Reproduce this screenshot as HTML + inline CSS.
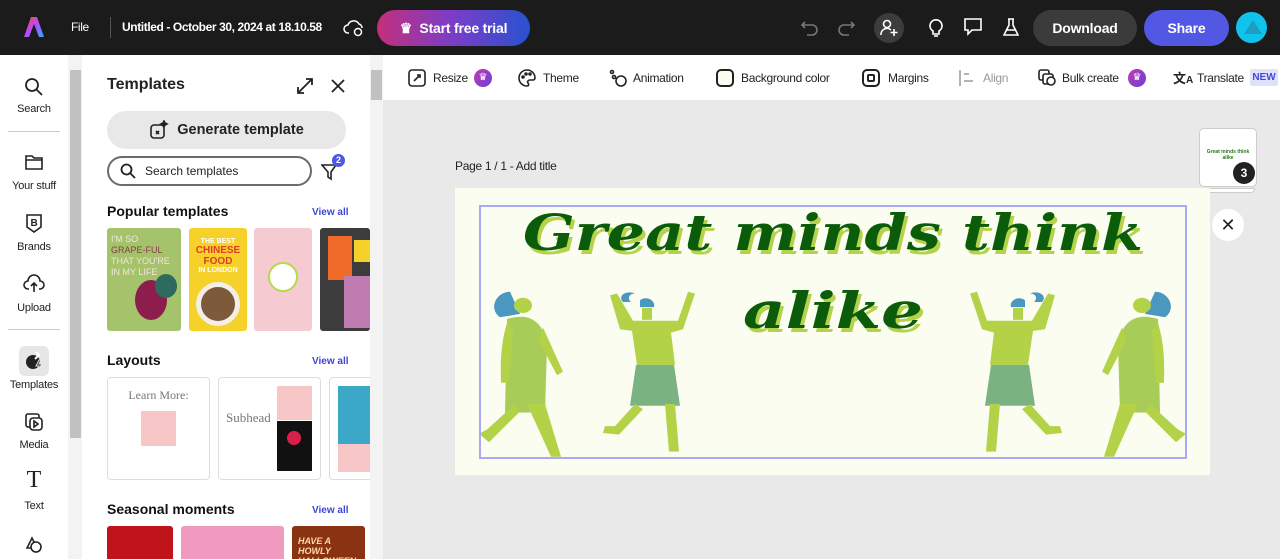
<!DOCTYPE html>
<html><head><meta charset="utf-8"><style>
*{box-sizing:border-box;margin:0;padding:0}
html,body{width:1280px;height:559px;overflow:hidden}
body{font-family:"Liberation Sans",sans-serif;background:#e9e9e9;position:relative;color:#222}
.a{position:absolute}
.top{left:0;top:0;width:1280px;height:55px;background:#1b1b1b;color:#fff}
.t{font-size:12px;font-weight:bold;letter-spacing:-.4px}
.btn{border-radius:18px;color:#fff;font-weight:bold;font-size:14px;display:flex;align-items:center;justify-content:center;letter-spacing:-.2px}
.rail{left:0;top:55px;width:68px;height:504px;background:#fff}
.lbl{width:68px;text-align:center;font-size:11px;color:#222;letter-spacing:-.2px}
.ic{left:22px;width:24px;height:24px}
.panel{left:82px;top:55px;width:288px;height:504px;background:#fff;overflow:hidden}
.h{font-weight:bold;font-size:14px;color:#111}
.va{font-size:10px;font-weight:bold;color:#3f46d0}
.tb{top:55px;left:383px;width:897px;height:45px;background:#fff}
.ti{font-size:12px;color:#222;top:71px;letter-spacing:-.3px}
</style></head><body>
<div class="a top">
 <svg class="a" style="left:23px;top:16px" width="22" height="22" viewBox="0 0 22 22"><defs><linearGradient id="g" x1="0" y1="0" x2="1" y2="1"><stop offset="0" stop-color="#ff4b3b"/><stop offset=".5" stop-color="#b44dff"/><stop offset="1" stop-color="#2fa9ff"/></linearGradient></defs><path d="M8 1h6l7 20h-5l-5-13-5 13H1z" fill="url(#g)"/></svg>
 <div class="a t" style="left:71px;top:20px;font-weight:normal">File</div>
 <div class="a" style="left:110px;top:17px;width:1px;height:21px;background:#555"></div>
 <div class="a t" style="left:122px;top:20px">Untitled - October 30, 2024 at 18.10.58</div>
 <svg class="a" style="left:343px;top:17px" width="22" height="20" viewBox="0 0 22 20" fill="none" stroke="#fff" stroke-width="1.5"><path d="M6 16H5a4 4 0 0 1 0-8 6 6 0 0 1 11-1 4 4 0 0 1 3 4"/><circle cx="15" cy="15" r="3.5"/></svg>
 <div class="a btn" style="left:377px;top:10px;width:153px;height:36px;background:linear-gradient(90deg,#c2307b,#7a3dc8,#2952cf)">♛&nbsp; Start free trial</div>
 <svg class="a" style="left:800px;top:18px" width="56" height="20" viewBox="0 0 56 20" fill="none" stroke="#777" stroke-width="1.6"><path d="M5 4L2 7l3 3M2 7h10a5 5 0 0 1 0 10H7"/><path d="M51 4l3 3-3 3M54 7H44a5 5 0 0 0 0 10h5"/></svg>
 <div class="a" style="left:874px;top:13px;width:30px;height:30px;border-radius:50%;background:#3c3c3c"></div>
 <svg class="a" style="left:879px;top:18px" width="20" height="20" viewBox="0 0 20 20" fill="none" stroke="#fff" stroke-width="1.6"><circle cx="8" cy="6" r="3.5"/><path d="M2 17a6 6 0 0 1 10-5M15 11v7M11.5 14.5h7"/></svg>
 <svg class="a" style="left:927px;top:17px" width="18" height="20" viewBox="0 0 18 20" fill="none" stroke="#fff" stroke-width="1.6"><path d="M6 14a6 6 0 1 1 6 0v3H6z"/><path d="M7 19h4"/></svg>
 <svg class="a" style="left:963px;top:17px" width="20" height="20" viewBox="0 0 20 20" fill="none" stroke="#fff" stroke-width="1.6"><path d="M2 2h16v11H9l-4 4v-4H2z"/></svg>
 <svg class="a" style="left:1003px;top:17px" width="16" height="20" viewBox="0 0 16 20" fill="none" stroke="#fff" stroke-width="1.6"><path d="M5 2h6M6 2v6L1 18h14L10 8V2M3.5 13h9"/></svg>
 <div class="a btn" style="left:1033px;top:10px;width:104px;height:36px;background:#3b3b3b">Download</div>
 <div class="a btn" style="left:1144px;top:10px;width:85px;height:36px;background:#5258e4">Share</div>
 <div class="a" style="left:1236px;top:12px;width:31px;height:31px;border-radius:50%;background:#0fc3ec;overflow:hidden"><div style="margin:8px 0 0 8px;width:0;height:0;border-left:9px solid transparent;border-right:9px solid transparent;border-bottom:14px solid #1c9ec0"></div></div>
</div>

<div class="a rail">
 <svg class="a ic" style="top:20px" viewBox="0 0 24 24" fill="none" stroke="#222" stroke-width="1.8"><circle cx="10" cy="10" r="6"/><path d="M14.5 14.5L20 20"/></svg>
 <div class="a lbl" style="top:48px">Search</div>
 <div class="a" style="left:8px;top:76px;width:52px;height:1px;background:#ccc"></div>
 <svg class="a ic" style="top:95px" viewBox="0 0 24 24" fill="none" stroke="#222" stroke-width="1.6"><path d="M4 6h6l2 2h8v11H4z M4 10h16"/></svg>
 <div class="a lbl" style="top:125px">Your stuff</div>
 <svg class="a ic" style="top:156px" viewBox="0 0 24 24" fill="none" stroke="#222" stroke-width="1.6"><path d="M5 4h14v12l-7 5-7-5z"/><text x="8.5" y="15" font-size="10" font-weight="bold" fill="#222" stroke="none" font-family="Liberation Sans">B</text></svg>
 <div class="a lbl" style="top:186px">Brands</div>
 <svg class="a ic" style="top:217px" viewBox="0 0 24 24" fill="none" stroke="#222" stroke-width="1.6"><path d="M7 17H6a4 4 0 0 1 0-8 6 6 0 0 1 12 0 4 4 0 0 1 0 8h-1M12 20v-9M9 14l3-3 3 3"/></svg>
 <div class="a lbl" style="top:247px">Upload</div>
 <div class="a" style="left:8px;top:274px;width:52px;height:1px;background:#ccc"></div>
 <div class="a" style="left:19px;top:291px;width:30px;height:30px;border-radius:6px;background:#e6e6e6"></div>
 <svg class="a ic" style="top:294px" viewBox="0 0 24 24"><circle cx="11" cy="13" r="7" fill="#222"/><path d="M14 3l3 3-4 4" stroke="#fff" stroke-width="2" fill="none"/><path d="M17 11l-3 6h3l-2 5 5-7h-3l2-4z" fill="#222" stroke="#e6e6e6"/></svg>
 <div class="a lbl" style="top:324px">Templates</div>
 <svg class="a ic" style="top:355px" viewBox="0 0 24 24" fill="none" stroke="#222" stroke-width="1.6"><rect x="4" y="4" width="13" height="13" rx="2"/><rect x="8" y="8" width="12" height="12" rx="3" fill="#fff"/><path d="M12 11v6l4-3z"/></svg>
 <div class="a lbl" style="top:384px">Media</div>
 <div class="a" style="left:22px;top:412px;width:24px;font-family:'Liberation Serif',serif;font-size:24px;text-align:center">T</div>
 <div class="a lbl" style="top:445px">Text</div>
 <svg class="a ic" style="top:477px" viewBox="0 0 24 24" fill="none" stroke="#222" stroke-width="1.6"><path d="M5 16l5-10 5 10z"/><circle cx="14" cy="15" r="5" fill="#fff"/></svg>
</div>
<div class="a" style="left:68px;top:55px;width:14px;height:504px;background:#f3f3f3"></div>
<div class="a" style="left:70px;top:70px;width:11px;height:368px;background:#c1c1c1"></div>
<div class="a" style="left:370px;top:55px;width:13px;height:504px;background:#f3f3f3"></div>
<div class="a" style="left:371px;top:70px;width:11px;height:30px;background:#c1c1c1"></div>

<div class="a panel">
 <div class="a" style="left:25px;top:21px;font-size:16px;font-weight:bold">Templates</div>
 <svg class="a" style="left:214px;top:22px" width="18" height="18" viewBox="0 0 18 18" fill="none" stroke="#222" stroke-width="1.8"><path d="M2 16L16 2M10 2h6v6M2 10v6h6"/></svg>
 <svg class="a" style="left:249px;top:24px" width="14" height="14" viewBox="0 0 14 14" stroke="#222" stroke-width="1.8"><path d="M1 1l12 12M13 1L1 13"/></svg>
 <div class="a" style="left:25px;top:56px;width:239px;height:38px;border-radius:19px;background:#e8e8e8;font-size:14.5px;font-weight:bold;display:flex;align-items:center;justify-content:center;gap:8px"><svg width="20" height="20" viewBox="0 0 20 20" fill="none" stroke="#222" stroke-width="1.6"><rect x="2" y="5" width="13" height="13" rx="3"/><path d="M15 1l1 2 2 1-2 1-1 2-1-2-2-1 2-1z" fill="#222"/><path d="M7 11l3 3M10 11l-3 3"/></svg>Generate template</div>
 <div class="a" style="left:25px;top:101px;width:205px;height:30px;border-radius:15px;border:2px solid #6b6b6b;font-size:12px;padding-left:36px;line-height:26px">Search templates</div>
 <svg class="a" style="left:38px;top:108px" width="16" height="16" viewBox="0 0 16 16" fill="none" stroke="#222" stroke-width="1.8"><circle cx="6.5" cy="6.5" r="5"/><path d="M10 10l5 5"/></svg>
 <svg class="a" style="left:239px;top:108px" width="18" height="18" viewBox="0 0 18 18" fill="none" stroke="#222" stroke-width="1.6"><path d="M1 2h14l-5 7v7l-3-2V9z"/></svg>
 <div class="a" style="left:250px;top:99px;width:13px;height:13px;border-radius:50%;background:#4f57e6;color:#fff;font-size:9px;font-weight:bold;text-align:center;line-height:13px">2</div>
 <div class="a h" style="left:25px;top:148px">Popular templates</div>
 <div class="a va" style="left:230px;top:152px">View all</div>
 <div class="a" style="left:25px;top:173px;width:74px;height:103px;border-radius:3px;background:#a4c36a;overflow:hidden"><div style="color:#f0e6d8;font-size:9px;padding:6px 4px;line-height:11px">I'M SO<br><span style="color:#8a3a50">GRAPE-FUL</span><br>THAT YOU'RE<br>IN MY LIFE</div><div class="a" style="left:28px;top:52px;width:32px;height:40px;border-radius:50%;background:#8c1d4c"></div><div class="a" style="left:48px;top:46px;width:22px;height:24px;border-radius:50%;background:#2e6b5e"></div></div>
 <div class="a" style="left:107px;top:173px;width:58px;height:103px;border-radius:3px;background:#f6d12a;text-align:center;font-size:7px;font-weight:bold;color:#fff;padding-top:10px;overflow:hidden">THE BEST<div style="color:#e23a2a;font-size:10px">CHINESE FOOD</div>IN LONDON<div style="margin:8px auto 0;width:44px;height:44px;border-radius:50%;background:#7c5a3a;border:5px solid #f3efe8"></div></div>
 <div class="a" style="left:172px;top:173px;width:58px;height:103px;border-radius:3px;background:#f5cad0"><div style="margin:34px auto 0;width:30px;height:30px;border-radius:50%;background:#fff;border:2px solid #b5d94a"></div></div>
 <div class="a" style="left:238px;top:173px;width:50px;height:103px;border-radius:3px;background:#3c3c3c"><div class="a" style="left:8px;top:8px;width:24px;height:44px;background:#f06b2a"></div><div class="a" style="left:24px;top:48px;width:26px;height:52px;background:#c07bb0"></div><div class="a" style="left:34px;top:12px;width:16px;height:22px;background:#f6d12a"></div></div>
 <div class="a h" style="left:25px;top:297px">Layouts</div>
 <div class="a va" style="left:230px;top:301px">View all</div>
 <div class="a" style="left:25px;top:322px;width:103px;height:103px;border:1px solid #ddd;border-radius:4px;background:#fff;text-align:center;font-family:'Liberation Serif',serif;font-size:12px;color:#777;padding-top:10px">Learn More:<div style="margin:8px auto;width:35px;height:35px;background:#f7c6c6"></div></div>
 <div class="a" style="left:136px;top:322px;width:103px;height:103px;border:1px solid #ddd;border-radius:4px;background:#fff"><div class="a" style="left:7px;top:32px;font-family:'Liberation Serif',serif;font-size:13px;color:#777">Subhead</div><div class="a" style="left:58px;top:8px;width:35px;height:34px;background:#f7c6c6"></div><div class="a" style="left:58px;top:43px;width:35px;height:50px;background:#111"><div style="margin:10px;width:14px;height:14px;border-radius:50%;background:#d8204a"></div></div></div>
 <div class="a" style="left:247px;top:322px;width:45px;height:103px;border:1px solid #ddd;border-radius:4px;background:#fff;overflow:hidden"><div style="margin:8px 0 0 8px;width:40px;height:58px;background:#3aa8c6"></div><div style="margin-left:8px;width:40px;height:28px;background:#f7c6c6"></div></div>
 <div class="a h" style="left:25px;top:446px">Seasonal moments</div>
 <div class="a va" style="left:230px;top:450px">View all</div>
 <div class="a" style="left:25px;top:471px;width:66px;height:40px;border-radius:3px;background:#c0141c"></div>
 <div class="a" style="left:99px;top:471px;width:103px;height:40px;border-radius:3px;background:#f09ac0"></div>
 <div class="a" style="left:210px;top:471px;width:73px;height:40px;border-radius:3px;background:#8a3312;color:#ffd9a0;font-size:9px;font-weight:bold;font-style:italic;padding:10px 0 0 6px">HAVE A HOWLY HALLOWEEN</div>
</div>

<div class="a tb"></div>
<svg class="a" style="left:408px;top:69px" width="18" height="18" viewBox="0 0 18 18" fill="none" stroke="#222" stroke-width="1.6"><rect x="1" y="1" width="16" height="16" rx="3"/><path d="M6 12l6-6M9 6h3v3"/></svg>
<div class="a ti" style="left:433px">Resize</div>
<div class="a" style="left:474px;top:69px;width:18px;height:18px;border-radius:50%;background:linear-gradient(135deg,#c13bb0,#6a3fd6);color:#fff;font-size:10px;text-align:center;line-height:18px">♛</div>
<svg class="a" style="left:518px;top:69px" width="18" height="18" viewBox="0 0 18 18" fill="none" stroke="#222" stroke-width="1.6"><path d="M9 1a8 8 0 1 0 0 16c2 0 2-2 1-3s0-3 2-3h3a2 2 0 0 0 2-2A8 8 0 0 0 9 1z"/><circle cx="5" cy="8" r="1" fill="#222"/><circle cx="8" cy="5" r="1" fill="#222"/><circle cx="12" cy="5" r="1" fill="#222"/></svg>
<div class="a ti" style="left:543px">Theme</div>
<svg class="a" style="left:608px;top:69px" width="20" height="18" viewBox="0 0 20 18" fill="none" stroke="#222" stroke-width="1.6"><circle cx="13" cy="12" r="5"/><circle cx="4" cy="3" r="1.5"/><circle cx="6" cy="8" r="1.5"/></svg>
<div class="a ti" style="left:633px">Animation</div>
<div class="a" style="left:716px;top:69px;width:18px;height:18px;border-radius:5px;border:2px solid #222;background:#fafdf0"></div>
<div class="a ti" style="left:741px">Background color</div>
<div class="a" style="left:862px;top:69px;width:18px;height:18px;border-radius:5px;border:2px solid #222"><div style="margin:3px;height:8px;border:2px solid #222;border-radius:2px"></div></div>
<div class="a ti" style="left:888px">Margins</div>
<svg class="a" style="left:958px;top:69px" width="18" height="18" viewBox="0 0 18 18" fill="none" stroke="#aaa" stroke-width="1.8"><path d="M2 1v16M6 5h5M6 12h9"/></svg>
<div class="a ti" style="left:983px;color:#999">Align</div>
<svg class="a" style="left:1038px;top:69px" width="20" height="18" viewBox="0 0 20 18" fill="none" stroke="#222" stroke-width="1.6"><rect x="1" y="1" width="10" height="10" rx="2"/><rect x="5" y="5" width="10" height="10" rx="2" fill="#fff"/><circle cx="13" cy="12" r="4" fill="#fff"/></svg>
<div class="a ti" style="left:1062px">Bulk create</div>
<div class="a" style="left:1128px;top:69px;width:18px;height:18px;border-radius:50%;background:linear-gradient(135deg,#c13bb0,#6a3fd6);color:#fff;font-size:10px;text-align:center;line-height:18px">♛</div>
<div class="a" style="left:1173px;top:68px;font-size:13px;font-weight:bold;font-family:'Liberation Sans','Noto Sans CJK SC',sans-serif">文<span style="font-size:10px">A</span></div>
<div class="a ti" style="left:1197px">Translate</div>
<div class="a" style="left:1250px;top:69px;width:28px;height:17px;background:#e0e2fb;color:#4148d3;font-size:10px;font-weight:bold;text-align:center;line-height:17px;border-radius:2px">NEW</div>

<div class="a" style="left:455px;top:159px;font-size:12px;color:#222;letter-spacing:-.3px">Page 1 / 1 - Add title</div>
<div class="a" style="left:1201px;top:188px;width:54px;height:5px;border-radius:0 0 4px 4px;background:#fff;border:1px solid #ccc"></div>
<div class="a" style="left:1199px;top:128px;width:58px;height:59px;border-radius:5px;background:#fff;border:1px solid #ccc;text-align:center;font-size:5px;color:#2a7a1a;font-weight:bold;padding-top:20px">Great minds think<br>alike</div>
<div class="a" style="left:1233px;top:162px;width:22px;height:22px;border-radius:50%;background:#222;color:#fff;font-size:12px;font-weight:bold;text-align:center;line-height:22px">3</div>
<div class="a" style="left:1212px;top:209px;width:32px;height:32px;border-radius:50%;background:#fff;text-align:center;line-height:32px;font-size:18px">✕</div>

<div class="a" style="left:455px;top:188px;width:755px;height:287px;background:#fafdf0"></div>
<svg class="a" style="left:455px;top:188px" width="755" height="287" viewBox="0 0 755 287">
 <defs>
  <g id="fig">
  <path d="M55 108c-14 0-22 20-10 30l20-4z" fill="#4a98c0"/>
  <circle cx="68" cy="124" r="9" fill="#b4d248"/>
  <path d="M52 140c22-8 36 2 40 30l-2 80H50z" fill="#a8cc58"/>
  <path d="M52 145c-8 30-6 60-6 70h8l4-62zM88 150l20 52-6 4-18-40z" fill="#b4d248"/>
  <path d="M60 240l-28 30-8 5 10 10 30-35zM72 240l24 62h10l-16-62z" fill="#b4d248"/>
  <path d="M168 120c-6-8 4-14 12-10-6 0-8 6-4 10z M185 118c6-6 16 0 14 8h-14z" fill="#4a98c0"/>
  <rect x="187" y="127" width="10" height="14" fill="#b4d248"/>
  <path d="M155 112l10 40 12 2 5 40h38l-4-38 12-4 12-42-7-2-10 34h-45l-16-32z" fill="#b4d248"/>
  <path d="M181 194h38l6 48h-50z" fill="#7bb281"/>
  <path d="M180 240l-20 26-10 0-2 8 16 2 24-30zM210 240l4 56 10 0-4-56z" fill="#b4d248"/>
  </g>
 </defs>
 <g transform="translate(0 12) scale(1 0.85)"><use href="#fig"/></g>
 <g transform="translate(755 12) scale(-1 0.85)"><use href="#fig"/></g>
 <text x="381" y="66" text-anchor="middle" textLength="620" lengthAdjust="spacingAndGlyphs" font-family="'DejaVu Serif',serif" font-style="italic" font-weight="bold" font-size="50" fill="#b5d24a">Great minds think</text>
 <text x="378" y="62" text-anchor="middle" textLength="620" lengthAdjust="spacingAndGlyphs" font-family="'DejaVu Serif',serif" font-style="italic" font-weight="bold" font-size="50" fill="#0a5c0a">Great minds think</text>
 <text x="381" y="144" text-anchor="middle" textLength="180" lengthAdjust="spacingAndGlyphs" font-family="'DejaVu Serif',serif" font-style="italic" font-weight="bold" font-size="50" fill="#b5d24a">alike</text>
 <text x="378" y="140" text-anchor="middle" textLength="180" lengthAdjust="spacingAndGlyphs" font-family="'DejaVu Serif',serif" font-style="italic" font-weight="bold" font-size="50" fill="#0a5c0a">alike</text>
</svg>
<div class="a" style="left:479px;top:205px;width:708px;height:254px;border:2px solid #a9a9f5"></div>
</body></html>
